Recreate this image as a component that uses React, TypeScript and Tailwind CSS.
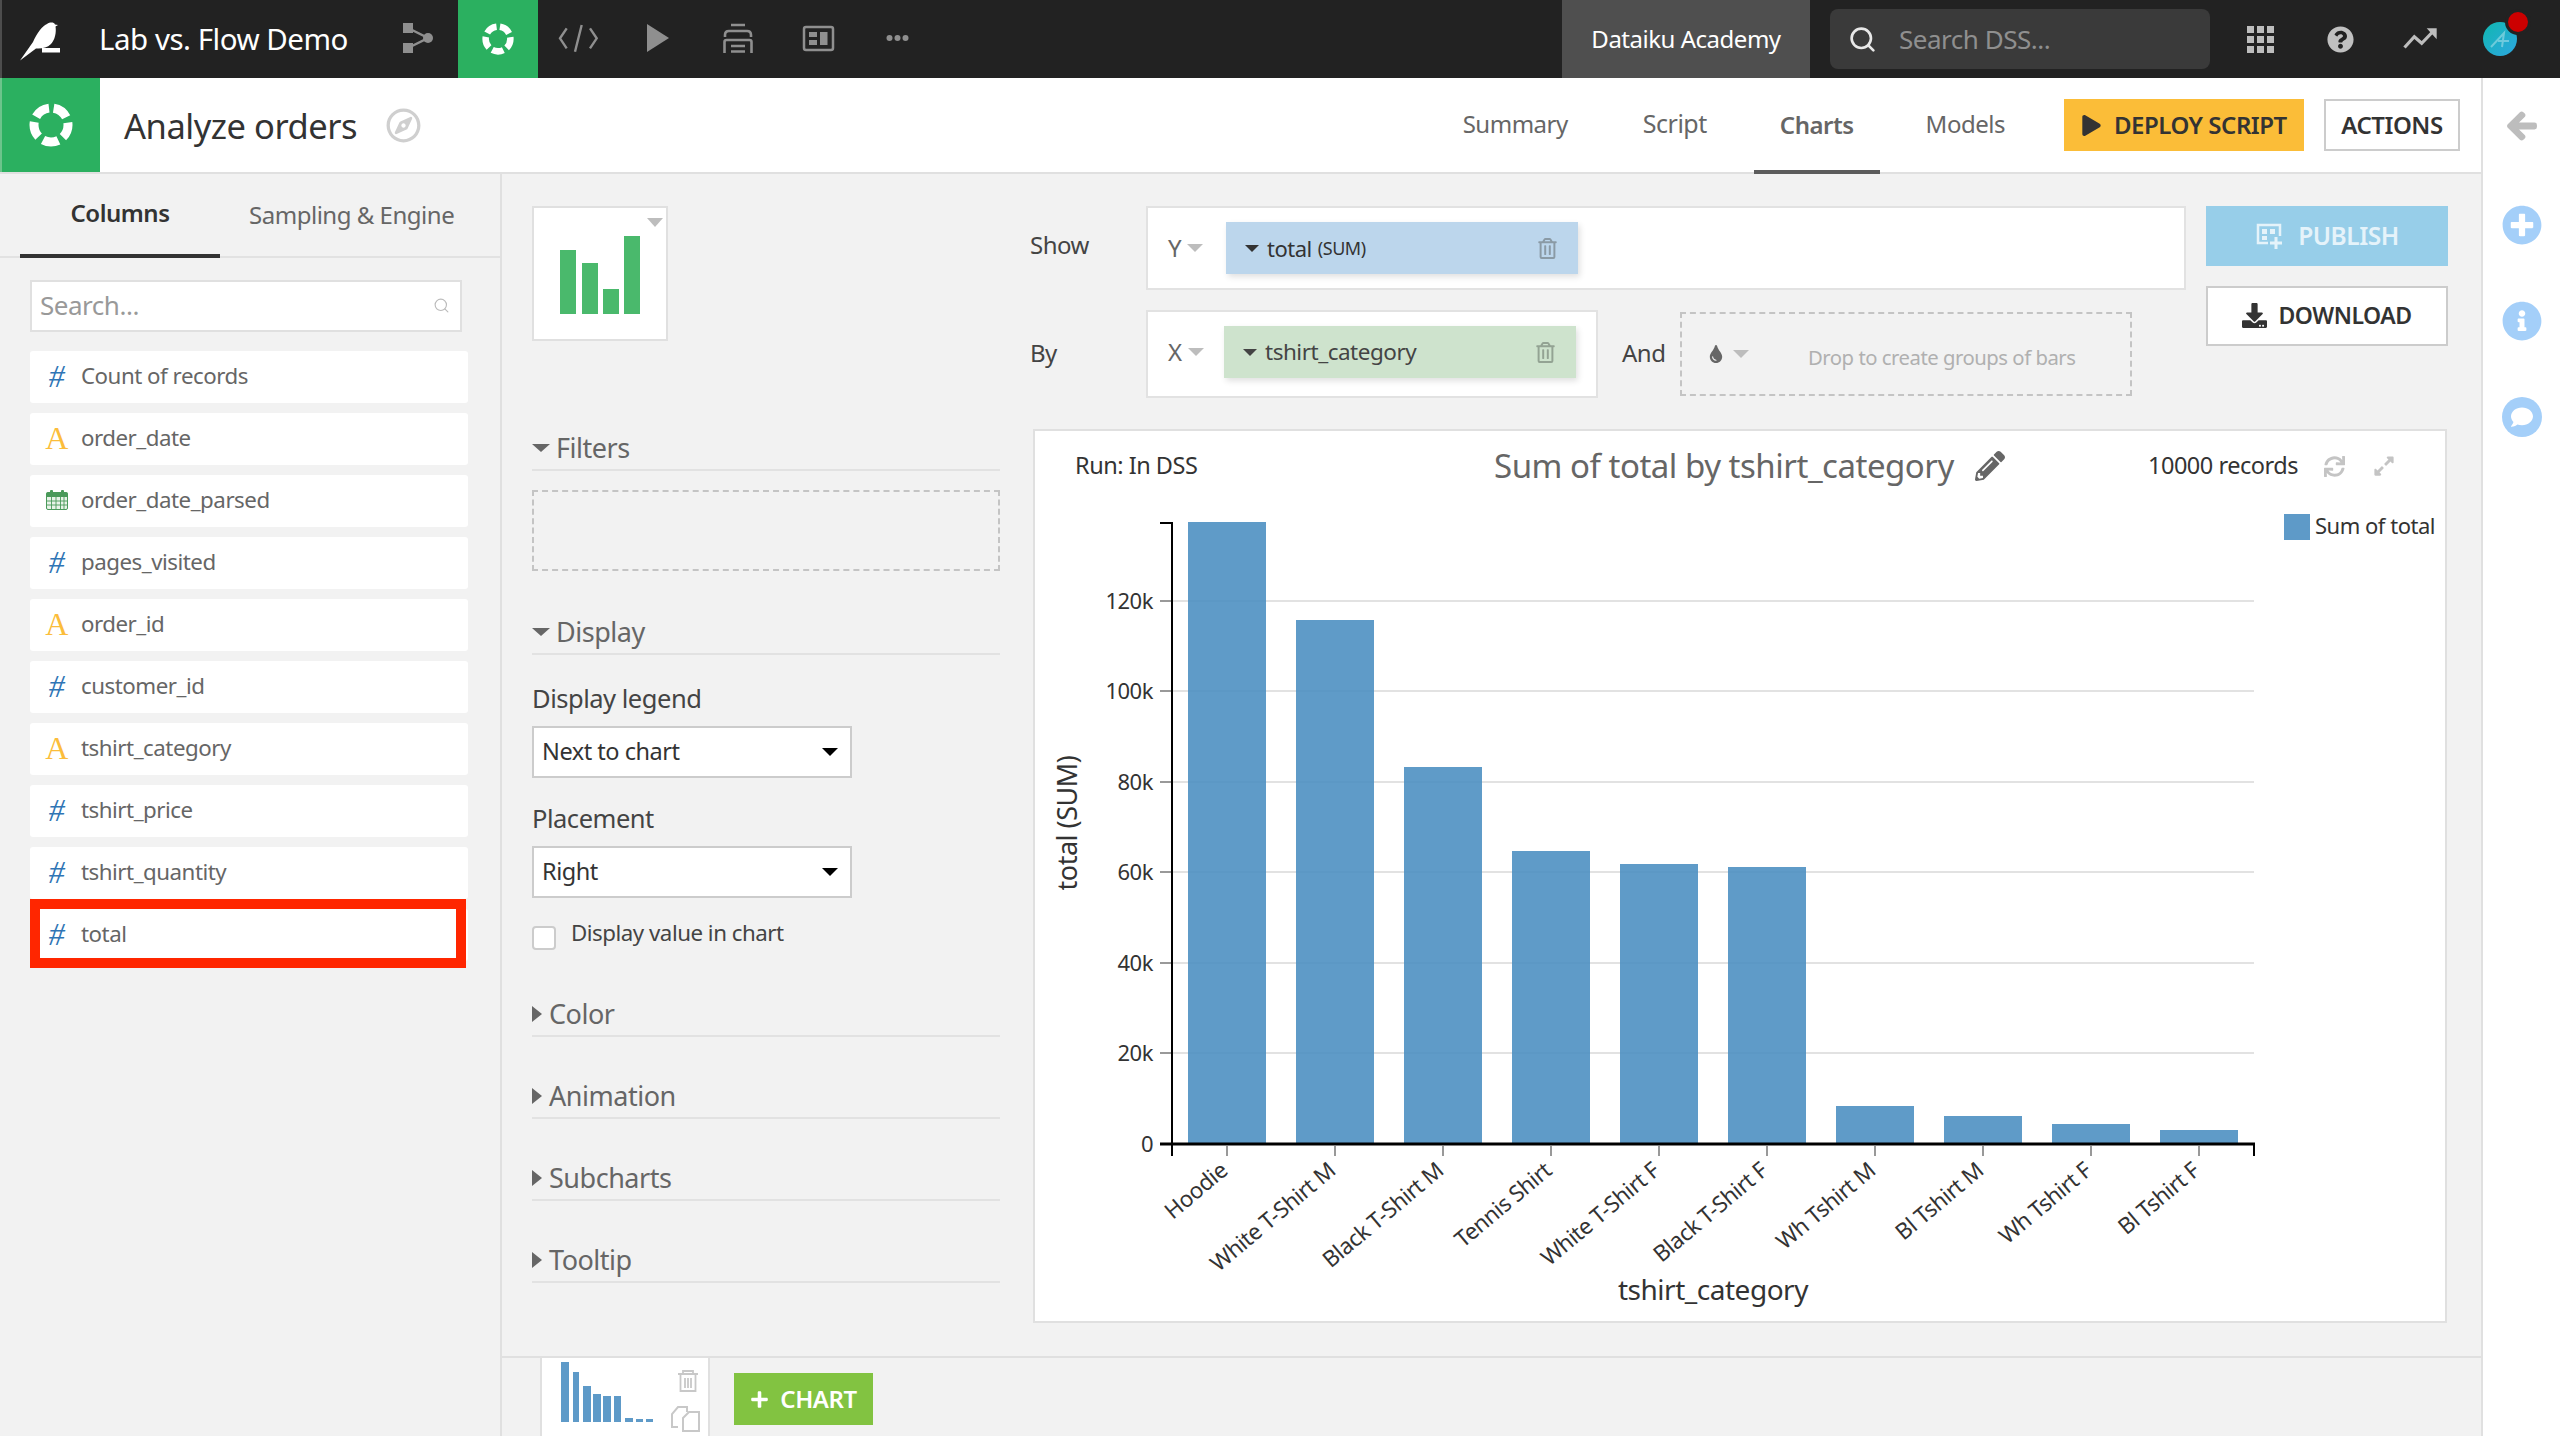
import {
  FaArrowLeft,
  FaComment,
  FaDownload,
  FaExpandAlt,
  FaInfoCircle,
  FaPencilAlt,
  FaPlay,
  FaPlus,
  FaPlusCircle,
  FaQuestionCircle,
  FaRegCompass,
  FaRegTrashAlt,
  FaSync,
  FaTint,
} from "react-icons/fa";
import { Search } from "lucide-react";

const columns = [
  { name: "Count of records", type: "num" },
  { name: "order_date", type: "text" },
  { name: "order_date_parsed", type: "date" },
  { name: "pages_visited", type: "num" },
  { name: "order_id", type: "text" },
  { name: "customer_id", type: "num" },
  { name: "tshirt_category", type: "text" },
  { name: "tshirt_price", type: "num" },
  { name: "tshirt_quantity", type: "num" },
  { name: "total", type: "num" },
];

const bars = [
  { label: "Hoodie", x: 1188, top: 522 },
  { label: "White T-Shirt M", x: 1296, top: 620 },
  { label: "Black T-Shirt M", x: 1404, top: 767 },
  { label: "Tennis Shirt", x: 1512, top: 851 },
  { label: "White T-Shirt F", x: 1620, top: 864 },
  { label: "Black T-Shirt F", x: 1728, top: 867 },
  { label: "Wh Tshirt M", x: 1836, top: 1106 },
  { label: "Bl Tshirt M", x: 1944, top: 1116 },
  { label: "Wh Tshirt F", x: 2052, top: 1124 },
  { label: "Bl Tshirt F", x: 2160, top: 1130 },
];

const yTicks = [
  { label: "120k", y: 601 },
  { label: "100k", y: 691 },
  { label: "80k", y: 782 },
  { label: "60k", y: 872 },
  { label: "40k", y: 963 },
  { label: "20k", y: 1053 },
];

const thumbBars = [
  [562, 8, 1362],
  [574, 6, 1372],
  [584, 8, 1386],
  [594, 8, 1394],
  [604, 8, 1396],
  [615, 7, 1396],
  [626, 8, 1418],
  [637, 7, 1419],
  [647, 7, 1419],
];

function RecipeIcon({ size }: { size: number }) {
  return (
    <svg width={size} height={size} viewBox="0 0 44 44">
      <circle
        cx="22"
        cy="22"
        r="17"
        fill="none"
        stroke="white"
        strokeWidth="9"
        strokeDasharray="15.86 5.5"
        strokeDashoffset="-2.75"
        transform="rotate(-90 22 22)"
      />
    </svg>
  );
}

function Logo() {
  return (
    <svg width="60" height="78" viewBox="0 0 60 78" className="-ml-[2px] shrink-0">
      <path
        d="M20 60.5L33 42C37 33 42 26 47 24C50 22 54 22 55 24.5L58 25L55.5 26.5C56.5 32 55 40 51 44C47 48 41 49 36 48.5Z"
        fill="white"
      />
      <rect x="42" y="48" width="18" height="4.5" fill="white" />
    </svg>
  );
}

function NavSlot({ children }: { children: React.ReactNode }) {
  return (
    <svg width="80" height="78" viewBox="0 0 80 78" className="shrink-0">
      {children}
    </svg>
  );
}

function ColumnIcon({ type }: { type: string }) {
  if (type === "num")
    return <span className="font-['Liberation_Serif',serif] italic text-[32px] leading-[32px] text-[#2f75b5]">#</span>;
  if (type === "text")
    return <span className="font-['Liberation_Serif',serif] text-[32px] leading-[32px] text-[#fbbd3b]">A</span>;
  return (
    <svg width="22" height="20" viewBox="0 0 22 20">
      <rect x="0.5" y="2.5" width="21" height="17" rx="1.5" fill="#e8f3e8" stroke="#4a9a5a" />
      <rect x="0.5" y="2.5" width="21" height="4.5" fill="#4a9a5a" />
      <path d="M1 11H21M1 15H21M5.5 7V19M10 7V19M14.5 7V19M18 7V19" stroke="#4a9a5a" strokeWidth="0.9" />
      <rect x="4" y="0" width="3" height="5" rx="1" fill="#4a9a5a" />
      <rect x="15" y="0" width="3" height="5" rx="1" fill="#4a9a5a" />
    </svg>
  );
}

function ColumnRow({ name, type }: { name: string; type: string }) {
  return (
    <div className="flex h-[52px] items-center rounded-[3px] bg-white pb-[3px]">
      <div className="flex w-[51px] shrink-0 justify-center pl-[2px]">
        <ColumnIcon type={type} />
      </div>
      <span className="text-[22.3px] text-[#666666]">{name}</span>
    </div>
  );
}

function SectionHead({ title, open }: { title: string; open?: boolean }) {
  return (
    <div className="flex h-[42px] items-center border-b-2 border-[#e2e2e2] pb-[2px] text-[27px] text-[#666666]">
      {open ? (
        <span className="mr-[6px] h-0 w-0 border-x-[9px] border-t-[8px] border-x-transparent border-t-[#666666]" />
      ) : (
        <span className="mr-[7px] h-0 w-0 border-y-[8px] border-l-[10px] border-y-transparent border-l-[#666666]" />
      )}
      {title}
    </div>
  );
}

function FakeSelect({ value }: { value: string }) {
  return (
    <div className="mt-[13px] flex h-[52px] w-[320px] items-center justify-between border-2 border-[#cccccc] bg-white pl-[8px] pr-[12px] text-[23.5px] text-[#333333]">
      {value}
      <span className="h-0 w-0 border-x-[8px] border-t-[8px] border-x-transparent border-t-black" />
    </div>
  );
}

function PillCaret({ color }: { color: string }) {
  return <span className="h-0 w-0 border-x-[7px] border-t-[7px] border-x-transparent" style={{ borderTopColor: color }} />;
}

function GrayCaret() {
  return <span className="h-0 w-0 border-x-[8px] border-t-[8px] border-x-transparent border-t-[#bdbdbd]" />;
}

function Chart() {
  return (
    <svg width="1410" height="820" viewBox="1035 501 1410 820" className="block">
      {yTicks.map((t) => (
        <line key={t.y} x1="1172" x2="2254" y1={t.y} y2={t.y} stroke="#e2e2e2" strokeWidth="2" />
      ))}
      {yTicks.map((t) => (
        <g key={t.label}>
          <line x1="1160" x2="1172" y1={t.y} y2={t.y} stroke="#999999" strokeWidth="2" />
          <text x="1153" y={t.y + 8} textAnchor="end" fontSize="22" fill="#333333">
            {t.label}
          </text>
        </g>
      ))}
      <text x="1153" y="1152" textAnchor="end" fontSize="22" fill="#333333">
        0
      </text>
      {bars.map((b) => (
        <rect key={b.label} x={b.x} y={b.top} width="78" height={1144 - b.top} fill="#4e90c2" fillOpacity="0.9" />
      ))}
      <path d="M1160 523H1172V1156" fill="none" stroke="black" strokeWidth="2" />
      <line x1="1160" x2="2255" y1="1144" y2="1144" stroke="black" strokeWidth="3" />
      <line x1="2254" x2="2254" y1="1144" y2="1156" stroke="black" strokeWidth="2" />
      {bars.map((b) => (
        <g key={b.label}>
          <line x1={b.x + 39} x2={b.x + 39} y1="1146" y2="1156" stroke="#999999" strokeWidth="2" />
          <text
            x={b.x + 41}
            y="1173"
            textAnchor="end"
            fontSize="22.5"
            fill="#333333"
            transform={`rotate(-40 ${b.x + 41} 1173)`}
          >
            {b.label}
          </text>
        </g>
      ))}
      <text x="1713" y="1300" textAnchor="middle" fontSize="28" fill="#333333">
        tshirt_category
      </text>
      <text x="1077" y="823" textAnchor="middle" fontSize="27" fill="#333333" transform="rotate(-90 1077 823)">
        total (SUM)
      </text>
      <rect x="2284" y="514" width="26" height="26" fill="#5e9ac8" />
      <text x="2315" y="534" fontSize="22" fill="#333333">
        Sum of total
      </text>
    </svg>
  );
}

export default function App() {
  return (
    <div className="flex h-[1436px] w-[2560px] flex-col overflow-hidden bg-[#f2f2f2] font-['Noto_Sans',sans-serif] tracking-[-0.03em]">
      {/* Top nav */}
      <div className="flex h-[78px] shrink-0 items-center border-l-2 border-[#4d4d4d] bg-[#222222]">
        <Logo />
        <div className="w-[39px] shrink-0" />
        <span className="w-[279px] shrink-0 text-[29.5px] text-white">Lab vs. Flow Demo</span>
        <NavSlot>
          <path d="M30 28L50 38L30 48" fill="none" stroke="#8f8f8f" strokeWidth="2.5" />
          <rect x="25" y="23" width="10" height="10" fill="#8f8f8f" />
          <rect x="25" y="43" width="10" height="10" fill="#8f8f8f" />
          <circle cx="50" cy="38" r="5" fill="#8f8f8f" />
        </NavSlot>
        <div className="flex h-full w-[80px] shrink-0 items-center justify-center bg-[#2bb060]">
          <RecipeIcon size={32} />
        </div>
        <NavSlot>
          <path
            d="M28.7 28.3L22 38.3L28.7 48.3M52 28.3L58.7 38.3L52 48.3M43.7 25L37 51.7"
            fill="none"
            stroke="#8f8f8f"
            strokeWidth="2.4"
          />
        </NavSlot>
        <NavSlot>
          <polygon points="29,24 51,38 29,52" fill="#8f8f8f" />
        </NavSlot>
        <NavSlot>
          <path
            d="M33 25H47M27 37V35Q27 31 31 31H49Q53 31 53 35V37M26.5 53V42Q26.5 40 28.5 40H51.5Q53.5 40 53.5 42V53M33 46H47M33 51.5H47"
            fill="none"
            stroke="#8f8f8f"
            strokeWidth="2.6"
          />
        </NavSlot>
        <NavSlot>
          <rect x="26" y="27" width="29" height="23" rx="2" fill="none" stroke="#8f8f8f" strokeWidth="2.5" />
          <rect x="31" y="32" width="8" height="5" fill="#8f8f8f" />
          <rect x="31" y="40" width="8" height="5" fill="#8f8f8f" />
          <rect x="42" y="32" width="7.5" height="13" fill="#8f8f8f" />
        </NavSlot>
        <NavSlot>
          <circle cx="31.5" cy="38" r="3" fill="#8f8f8f" />
          <circle cx="39.5" cy="38" r="3" fill="#8f8f8f" />
          <circle cx="47.5" cy="38" r="3" fill="#8f8f8f" />
        </NavSlot>
        <div className="flex-1" />
        <div className="flex h-full w-[248px] shrink-0 items-center justify-center bg-[#4f4f4f] text-[24px] text-white">
          Dataiku Academy
        </div>
        <div className="ml-[20px] flex h-[60px] w-[380px] shrink-0 items-center rounded-lg bg-[#3a3a3a] pl-[18px]">
          <Search size={29} color="#e8e8e8" strokeWidth={2.2} />
          <span className="ml-[22px] text-[26px] text-[#8f8f8f]">Search DSS...</span>
        </div>
        <div className="ml-[10px] flex h-full w-[80px] shrink-0 items-center justify-center">
          <div className="grid grid-cols-3 gap-[3px]">
            {Array.from({ length: 9 }).map((_, i) => (
              <span key={i} className="h-[7px] w-[7px] bg-[#bdbdbd]" />
            ))}
          </div>
        </div>
        <div className="flex h-full w-[80px] shrink-0 items-center justify-center">
          <FaQuestionCircle size={27} color="#c0c0c0" />
        </div>
        <NavSlot>
          <path d="M24.5 47.5L34.3 36.7L41.7 43.3L53 31.5" fill="none" stroke="#bdbdbd" strokeWidth="3.2" />
          <polygon points="46.7,28.3 56.7,28.3 56.7,39.3" fill="#bdbdbd" />
        </NavSlot>
        <div className="relative flex h-full w-[80px] shrink-0 items-center justify-center">
          <div className="h-[34px] w-[34px] rounded-full bg-gradient-to-br from-[#0fb7b0] to-[#2da6e0]">
            <svg width="34" height="34" viewBox="0 0 34 34">
              <path d="M8 25L21 11L19 25M15 19H26" fill="none" stroke="white" strokeOpacity="0.35" strokeWidth="2" />
            </svg>
          </div>
          <span className="absolute left-[45px] top-[9px] box-content h-[20px] w-[20px] rounded-full border-[3px] border-[#222222] bg-[#cc0000]" />
        </div>
        <div className="w-[20px] shrink-0" />
      </div>

      <div className="flex min-h-0 flex-1">
        <div className="flex min-w-0 flex-1 flex-col">
          {/* Recipe header */}
          <div className="flex h-[96px] shrink-0 items-stretch border-b-2 border-[#e0e0e0] bg-white">
            <div className="flex h-[94px] w-[100px] shrink-0 items-center justify-center border-l-2 border-[#6cc48b] bg-[#2bb060]">
              <RecipeIcon size={44} />
            </div>
            <div className="ml-[24px] flex items-center pt-[2px] text-[34.5px] text-[#333333]">Analyze orders</div>
            <div className="ml-[29px] flex items-center">
              <FaRegCompass size={35} color="#cfcfcf" />
            </div>
            <div className="flex-1" />
            <div className="flex gap-[20px] text-[24px] text-[#666666]">
              <div className="flex items-center pb-[2px] pl-[26px] pr-[29px]">Summary</div>
              <div className="flex items-center pb-[2px] pl-[26px] pr-[27px] text-[25px]">Script</div>
              <div className="-mb-[2px] flex items-center border-b-4 border-[#5c5c5c] px-[26px] pt-[2px] font-semibold">
                Charts
              </div>
              <div className="flex items-center pb-[2px] px-[26px]">Models</div>
            </div>
            <div className="ml-[33px] flex items-center">
              <div className="flex h-[52px] w-[240px] items-center bg-[#fbbd38] pl-[17px] text-[24px] font-semibold text-[#333333]">
                <FaPlay size={21} />
                <span className="ml-[12px]">DEPLOY SCRIPT</span>
              </div>
              <div className="ml-[20px] flex h-[52px] w-[136px] items-center justify-center border-2 border-[#cccccc] bg-white text-[24px] font-semibold text-[#333333]">
                ACTIONS
              </div>
            </div>
            <div className="w-[21px] shrink-0" />
          </div>

          <div className="flex min-h-0 flex-1">
            {/* Columns sidebar */}
            <div className="flex w-[502px] shrink-0 flex-col border-r-2 border-[#e0e0e0]">
              <div className="flex h-[84px] shrink-0 border-b-2 border-[#e2e2e2]">
                <div className="-mb-[2px] ml-[20px] flex w-[200px] items-center justify-center border-b-4 border-[#333333] pb-[2px] text-[24px] font-semibold text-[#333333]">
                  Columns
                </div>
                <div className="ml-[29px] flex items-center text-[24px] text-[#666666]">Sampling &amp; Engine</div>
              </div>
              <div className="mx-[30px] mt-[22px] flex h-[52px] w-[432px] items-center justify-between border-2 border-[#e0e0e0] bg-white pb-[2px] pl-[8px] pr-[10px]">
                <span className="text-[26px] text-[#999999]">Search...</span>
                <Search size={17} color="#bbbbbb" strokeWidth={1.6} />
              </div>
              <div className="mx-[30px] mt-[19px] flex w-[438px] flex-col gap-[10px]">
                {columns.map((c) => (
                  <div key={c.name} className="relative">
                    <ColumnRow name={c.name} type={c.type} />
                    {c.name === "total" && (
                      <div className="absolute -bottom-[7px] -top-[10px] left-0 right-[2px] border-[10px] border-[#ff2600]" />
                    )}
                  </div>
                ))}
              </div>
            </div>

            <div className="flex min-w-0 flex-1 flex-col">
              <div className="flex min-h-0 flex-1 pl-[30px] pt-[32px]">
                {/* Chart settings */}
                <div className="w-[468px] shrink-0">
                  <div className="relative h-[135px] w-[136px] border-2 border-[#e0e0e0] bg-white">
                    <svg width="132" height="131" viewBox="534 207 132 131" className="block">
                      <rect x="560" y="249" width="16" height="64" fill="#4ab96c" />
                      <rect x="582" y="262" width="16" height="51" fill="#4ab96c" />
                      <rect x="603" y="288" width="16" height="25" fill="#4ab96c" />
                      <rect x="624" y="235" width="16" height="78" fill="#4ab96c" />
                    </svg>
                    <span className="absolute right-[3px] top-[10px] h-0 w-0 border-x-[8px] border-t-[9px] border-x-transparent border-t-[#bdbdbd]" />
                  </div>
                  <div className="mt-[88px]">
                    <SectionHead title="Filters" open />
                  </div>
                  <div className="mt-[19px] h-[81px] border-2 border-dashed border-[#c4c4c4]" />
                  <div className="mt-[42px]">
                    <SectionHead title="Display" open />
                  </div>
                  <div className="mt-[28px] flex h-[30px] items-center text-[25.5px] text-[#444444]">Display legend</div>
                  <FakeSelect value="Next to chart" />
                  <div className="mt-[25px] flex h-[30px] items-center text-[25.5px] text-[#444444]">Placement</div>
                  <FakeSelect value="Right" />
                  <div className="mt-[28px] flex h-[24px] items-start">
                    <span className="h-[24px] w-[24px] rounded-[4px] border-2 border-[#cccccc] bg-white" />
                    <span className="-mt-[9px] ml-[15px] text-[22.3px] leading-[32px] text-[#444444]">Display value in chart</span>
                  </div>
                  <div className="mt-[45px]">
                    <SectionHead title="Color" />
                  </div>
                  <div className="mt-[40px]">
                    <SectionHead title="Animation" />
                  </div>
                  <div className="mt-[40px]">
                    <SectionHead title="Subcharts" />
                  </div>
                  <div className="mt-[40px]">
                    <SectionHead title="Tooltip" />
                  </div>
                </div>

                {/* Chart area */}
                <div className="ml-[30px] w-[1418px] shrink-0">
                  <div className="flex">
                    <div className="w-[1156px] shrink-0">
                      <div className="flex items-center">
                        <span className="w-[116px] shrink-0 pb-[6px] text-[24px] text-[#444444]">Show</span>
                        <div className="flex h-[84px] w-[1040px] items-center border-2 border-[#e2e2e2] bg-white">
                          <div className="flex w-[78px] shrink-0 items-center gap-[6px] pl-[20px] text-[24px] text-[#666666]">
                            Y <GrayCaret />
                          </div>
                          <div className="flex h-[52px] w-[352px] items-center bg-[#bcd6ec] pl-[19px] pr-[20px] text-[22px] text-[#333333] shadow-[2px_3px_6px_rgba(0,0,0,0.12)]">
                            <PillCaret color="#333333" />
                            <span className="ml-[8px]">total</span>
                            <span className="ml-[6px] text-[18px]">(SUM)</span>
                            <FaRegTrashAlt size={21} color="#8a9aa5" className="ml-auto" />
                          </div>
                        </div>
                      </div>
                      <div className="mt-[20px] flex items-center">
                        <span className="w-[116px] shrink-0 pb-[2px] text-[24px] text-[#444444]">By</span>
                        <div className="flex h-[88px] w-[452px] items-center border-2 border-[#e2e2e2] bg-white pb-[4px]">
                          <div className="flex w-[76px] shrink-0 items-center gap-[6px] pl-[20px] text-[24px] text-[#666666]">
                            X <GrayCaret />
                          </div>
                          <div className="flex h-[52px] w-[352px] items-center bg-[#cee3cd] pl-[19px] pr-[20px] text-[22.5px] text-[#444444] shadow-[2px_3px_6px_rgba(0,0,0,0.12)]">
                            <PillCaret color="#444444" />
                            <span className="ml-[8px]">tshirt_category</span>
                            <FaRegTrashAlt size={21} color="#93a393" className="ml-auto" />
                          </div>
                        </div>
                        <span className="ml-[24px] w-[58px] shrink-0 pb-[2px] text-[24px] text-[#444444]">And</span>
                        <div className="flex h-[84px] w-[452px] items-center border-2 border-dashed border-[#c4c4c4] pl-[25px]">
                          <FaTint size={18} color="#666666" />
                          <span className="ml-[8px] flex">
                            <GrayCaret />
                          </span>
                          <span className="ml-[59px] pt-[6px] text-[20.3px] text-[#b0b0b0]">Drop to create groups of bars</span>
                        </div>
                      </div>
                    </div>
                    <div className="ml-[20px] w-[242px] shrink-0">
                      <div className="flex h-[60px] items-center justify-center bg-[#97cee9] text-[24.5px] font-semibold text-[#e5f3fa]">
                        <svg width="28" height="28" viewBox="0 0 28 28" className="mr-[15px]">
                          <path d="M13 21H3V3H25V14" fill="none" stroke="#e5f3fa" strokeWidth="2.5" />
                          <path d="M7 7H12V12H7ZM15 7H20V12H15ZM7 14H12V18H7Z" fill="#e5f3fa" />
                          <path d="M21 15V27M15 21H27" stroke="#e5f3fa" strokeWidth="3" />
                        </svg>
                        PUBLISH
                      </div>
                      <div className="mt-[20px] flex h-[60px] items-center justify-center border-2 border-[#cccccc] bg-white pb-[2px] text-[23px] font-semibold text-[#333333]">
                        <FaDownload size={25} className="mr-[11px]" />
                        DOWNLOAD
                      </div>
                    </div>
                  </div>

                  {/* Chart panel */}
                  <div className="ml-[3px] mt-[31px] w-[1414px] border-2 border-[#e0e0e0] bg-white">
                    <div className="flex h-[70px] items-center pl-[40px]">
                      <span className="w-[419px] shrink-0 text-[23.5px] text-[#333333]">Run: In DSS</span>
                      <span className="text-[33px] text-[#666666]">Sum of total by tshirt_category</span>
                      <FaPencilAlt size={30} color="#666666" className="ml-[21px]" />
                      <div className="flex-1" />
                      <span className="text-[23.5px] text-[#333333]">10000 records</span>
                      <FaSync size={21} color="#c4c4c4" className="ml-[26px]" />
                      <FaExpandAlt size={22} color="#c4c4c4" className="ml-[28px] mr-[50px]" />
                    </div>
                    <Chart />
                  </div>
                </div>
              </div>

              {/* Chart tabs */}
              <div className="flex h-[80px] shrink-0 items-start border-t-2 border-[#e0e0e0] pl-[38px]">
                <div className="flex h-[80px] w-[170px] shrink-0 border-x-2 border-[#e0e0e0] bg-white">
                  <svg width="166" height="80" viewBox="543 1358 166 80" className="block">
                    {thumbBars.map(([x, w, top]) => (
                      <rect key={x} x={x} y={top} width={w} height={1422 - top} fill="#5e9ac8" />
                    ))}
                    <path
                      d="M679 1374H699M684 1374V1371H694V1374M681.5 1374V1391H696.5V1374M686 1378V1388M689 1378V1388M692 1378V1388"
                      fill="none"
                      stroke="#c8c8c8"
                      strokeWidth="1.8"
                    />
                    <path
                      d="M679 1427H673V1414L679 1407H688V1412M684 1418L690 1412H700V1431H684Z"
                      fill="none"
                      stroke="#c8c8c8"
                      strokeWidth="2"
                    />
                  </svg>
                </div>
                <div className="ml-[24px] mt-[15px] flex h-[52px] w-[139px] items-center justify-center bg-[#82c341] text-[24px] font-semibold text-white">
                  <FaPlus size={19} className="mr-[11px]" />
                  CHART
                </div>
              </div>
            </div>
          </div>
        </div>

        {/* Right rail */}
        <div className="flex w-[79px] shrink-0 flex-col items-center border-l-2 border-[#e0e0e0] bg-white pt-[32px]">
          <FaArrowLeft size={32} color="#bdbdbd" stroke="#bdbdbd" strokeWidth={30} />
          <FaPlusCircle size={40} color="#a4cff9" className="mt-[63px]" />
          <FaInfoCircle size={40} color="#a4cff9" className="mt-[56px]" />
          <div className="mt-[56px] flex h-[40px] w-[40px] items-center justify-center rounded-full bg-[#a4cff9]">
            <FaComment size={22} color="white" />
          </div>
        </div>
      </div>
    </div>
  );
}
